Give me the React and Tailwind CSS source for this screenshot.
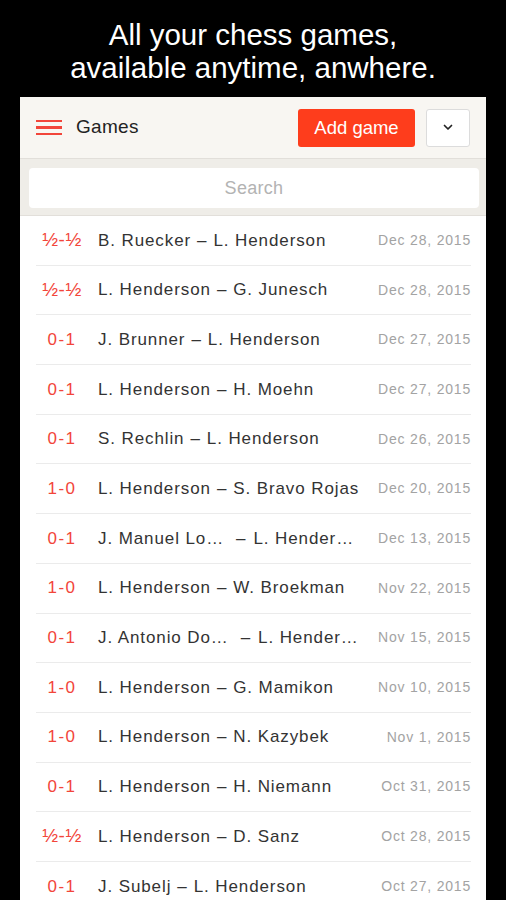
import React from 'react';

const games = [
    { result: '½-½', white: 'B. Ruecker', black: 'L. Henderson', date: 'Dec 28, 2015' },
    { result: '½-½', white: 'L. Henderson', black: 'G. Junesch', date: 'Dec 28, 2015' },
    { result: '0-1', white: 'J. Brunner', black: 'L. Henderson', date: 'Dec 27, 2015' },
    { result: '0-1', white: 'L. Henderson', black: 'H. Moehn', date: 'Dec 27, 2015' },
    { result: '0-1', white: 'S. Rechlin', black: 'L. Henderson', date: 'Dec 26, 2015' },
    { result: '1-0', white: 'L. Henderson', black: 'S. Bravo Rojas', date: 'Dec 20, 2015' },
    { result: '0-1', white: 'J. Manuel Lo…', black: 'L. Hender…', date: 'Dec 13, 2015', cut: true },
    { result: '1-0', white: 'L. Henderson', black: 'W. Broekman', date: 'Nov 22, 2015' },
    { result: '0-1', white: 'J. Antonio Do…', black: 'L. Hender…', date: 'Nov 15, 2015', cut: true },
    { result: '1-0', white: 'L. Henderson', black: 'G. Mamikon', date: 'Nov 10, 2015' },
    { result: '1-0', white: 'L. Henderson', black: 'N. Kazybek', date: 'Nov 1, 2015' },
    { result: '0-1', white: 'L. Henderson', black: 'H. Niemann', date: 'Oct 31, 2015' },
    { result: '½-½', white: 'L. Henderson', black: 'D. Sanz', date: 'Oct 28, 2015' },
    { result: '0-1', white: 'J. Subelj', black: 'L. Henderson', date: 'Oct 27, 2015' },
];

const GameRow = ({ game }) => (
    <div className="pl-4 pr-[15px]">
        <div className="flex items-center h-[49.7px] border-b border-[#ebebeb]">
            <span className={`w-[52px] shrink-0 text-center text-[#f2453a] ${game.result === '½-½' ? 'text-[19px] tracking-[0.5px]' : 'text-[17px] tracking-[1.5px]'}`}>
                {game.result}
            </span>
            <span className="ml-[10px] flex-1 text-[17px] tracking-[0.9px] text-[#333] whitespace-nowrap">
                {game.white}
                <span className={game.cut ? 'ml-[12px] mr-[7px]' : 'mx-[6px]'}>–</span>
                {game.black}
            </span>
            <span className="text-[14px] text-[#a3a3a3] tracking-[0.8px] whitespace-nowrap">{game.date}</span>
        </div>
    </div>
);

export default function App() {
    return (
        <div className="w-[506px] h-[900px] bg-black overflow-hidden font-['Liberation_Sans',Arial,sans-serif]">
            {/* titulo */}
            <div className="h-[97px] pt-[18px] text-center text-white text-[29.5px] leading-[33px]">
                <p>All your chess games,</p>
                <p>available anytime, anwhere.</p>
            </div>

            <div className="ml-[20px] w-[466px] h-[803px] bg-white">
                {/* barra superior */}
                <div className="h-[61px] bg-[#f8f6f2] flex items-center px-4">
                    <div className="w-[26px] flex flex-col gap-[4px]">
                        <div className="h-[2.5px] bg-[#f2453a]" />
                        <div className="h-[2.5px] bg-[#f2453a]" />
                        <div className="h-[2.5px] bg-[#f2453a]" />
                    </div>
                    <h1 className="ml-[14px] text-[19px] tracking-[0.3px] text-[#222]">Games</h1>
                    <button className="ml-auto w-[117px] h-[38px] rounded-[3px] bg-[#fe3d1c] text-white text-[18.5px]">
                        Add game
                    </button>
                    <button className="ml-[11px] w-[44px] h-[38px] rounded-[3px] bg-white border border-[#dcdcdc] flex items-center justify-center">
                        <svg width="10" height="7" viewBox="0 0 10 7" fill="none">
                            <path d="M1.5 1.5l3.5 3.5 3.5-3.5" stroke="#222" strokeWidth="1.7" strokeLinecap="round" strokeLinejoin="round" />
                        </svg>
                    </button>
                </div>

                {/* buscador */}
                <div className="h-[58px] bg-[#efede8] border-y border-[#e2dfda] pt-[9px] pl-[9px] pr-[7px]">
                    <div className="h-[40px] rounded-[4px] bg-white flex items-center justify-center text-[18px] tracking-[0.3px] text-[#b3b3b3]">
                        Search
                    </div>
                </div>

                {games.map((g, i) => (
                    <GameRow key={i} game={g} />
                ))}
            </div>
        </div>
    );
}
